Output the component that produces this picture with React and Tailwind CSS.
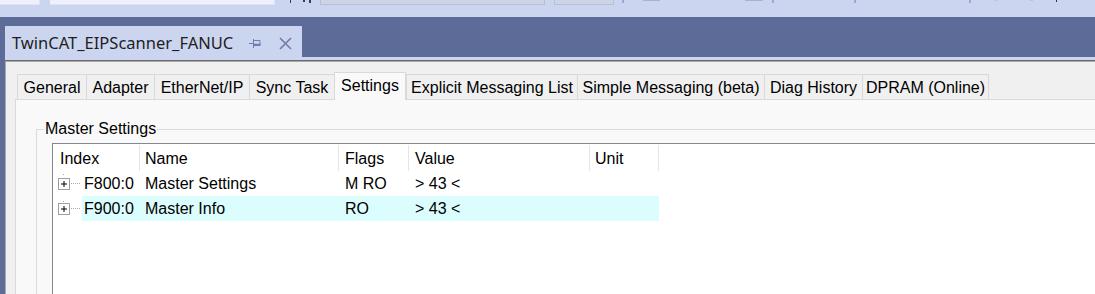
import React from "react";

const tabs = [
    { label: "General", w: "w-[69px]" },
    { label: "Adapter", w: "w-[68px]" },
    { label: "EtherNet/IP", w: "w-[95px]" },
    { label: "Sync Task", w: "w-[85px]" },
    { label: "Settings", w: "w-[72px]", active: true },
    { label: "Explicit Messaging List", w: "w-[171px]" },
    { label: "Simple Messaging (beta)", w: "w-[187px]" },
    { label: "Diag History", w: "w-[98px]" },
    { label: "DPRAM (Online)", w: "w-[127px]", last: true },
];

const rows = [
    { index: "F800:0", name: "Master Settings", flags: "M RO", value: "> 43 <", dotY: 3 },
    { index: "F900:0", name: "Master Info", flags: "RO", value: "> 43 <", dotY: 5, selected: true },
];

const TreeNode = ({ dotY }) => (
    <svg width="29" height="25" viewBox="0 0 29 25" className="shrink-0">
        <rect x="10" y={dotY} width="1" height="1" fill="#a8a8a8" />
        <rect x="5.5" y="7.5" width="11" height="11" fill="#fff" stroke="#a0a0a0" />
        <path d="M8 13h6M11 10v6" stroke="#000" strokeWidth="1" />
        {[18, 20, 22, 24, 26].map((x) => (
            <rect key={x} x={x} y="12" width="1" height="1" fill="#a8a8a8" />
        ))}
    </svg>
);

const App = () => {
    return (
        <div
            className="w-[1095px] h-[294px] overflow-hidden bg-[#ccd5f0] flex flex-col text-black"
            style={{ fontFamily: '"Liberation Sans", Arial, sans-serif' }}
        >
            {/* toolbar remnants */}
            <div className="h-[17px] shrink-0 flex items-start">
                <div className="w-[40px] h-[5px] bg-[#eef1fc] border-r border-b border-[#dde3f6]" />
                <div className="ml-[10px] w-[225px] h-[5px] bg-[#eef1fc] border-r border-b border-[#dde3f6]" />
                <div className="ml-[15px] w-[1px] h-[3px] bg-[#3a3f55]" />
                <div className="ml-[12px] w-[2px] h-[2px] bg-[#3a3f55]" />
                <div className="ml-[4px] w-[2px] h-[3px] bg-[#3a3f55]" />
                <div className="ml-[9px] w-[225px] h-[5px] bg-[#cdd4e8] border-x border-b border-[#b8bfd5]" />
                <div className="ml-[9px] w-[60px] h-[5px] bg-[#cdd4e8] border-x border-b border-[#b8bfd5]" />
                <div className="ml-[8px] w-[2px] h-[3px] bg-[#9aa7d9]" />
                <div className="ml-[19px] w-[17px] h-[1px] bg-[#a9b1cc]" />
                <div className="ml-[85px] w-[18px] h-[1px] bg-[#a9b1cc]" />
                <div className="ml-[9px] w-[2px] h-[3px] bg-[#9aa7d9]" />
                <div className="ml-[80px] w-[2px] h-[3px] bg-[#9aa7d9]" />
                <div className="ml-[113px] w-[2px] h-[3px] bg-[#9aa7d9]" />
                <div className="ml-[24px] w-[3px] h-[1px] bg-[#b8c1e2]" />
                <div className="ml-[32px] w-[3px] h-[1px] bg-[#b8c1e2]" />
                <div className="ml-[23px] w-[1px] h-[2px] bg-[#333]" />
            </div>

            {/* document tab well */}
            <div className="h-[40px] shrink-0 bg-[#5c6b98] flex items-end pl-[5px]">
                <div className="h-[31px] w-[297px] bg-[#ccd5f0] flex items-center pl-[7px] pt-[3px]">
                    <span
                        className="w-[237px] shrink-0 text-[16.5px] leading-[20px] text-[#1e1e1e] whitespace-nowrap"
                        style={{ fontFamily: '"Noto Sans", "Open Sans", sans-serif' }}
                    >
                        TwinCAT_EIPScanner_FANUC
                    </span>
                    <svg width="12" height="9" viewBox="0 0 12 9" className="mt-[1px]">
                        <path d="M0 4.5h4M4.5 0v9" stroke="#6e7fae" strokeWidth="1" />
                        <path d="M4.5 1.5h6.5v5h-6.5" fill="none" stroke="#6e7fae" strokeWidth="1" />
                        <path d="M4.5 5.5h7" stroke="#6e7fae" strokeWidth="1.5" />
                    </svg>
                    <svg width="13" height="13" viewBox="0 0 13 13" className="ml-[18px]">
                        <path d="M1 1l11 11M12 1L1 12" stroke="#6f7ca5" strokeWidth="1.6" />
                    </svg>
                </div>
            </div>

            <div className="flex flex-1 min-h-0">
                <div className="w-[5px] shrink-0 bg-[#5c6b98]" />
                <div className="flex-1 flex flex-col min-w-0">
                    <div className="h-[3px] shrink-0 bg-[#ccd5f0]" />
                    <div className="h-[1px] shrink-0 bg-[#6b6b6b]" />
                    <div className="flex-1 flex flex-col bg-[#f0f0f0] border-t border-l border-[#a9a9a9] pl-[9px] pt-[10px]">
                        {/* property tabs */}
                        <div className="flex items-end h-[28px] ml-[2px] -mb-px relative z-10">
                            {tabs.map((t) =>
                                t.active ? (
                                    <div
                                        key={t.label}
                                        className={`${t.w} h-[28px] flex items-center justify-center pb-[2px] bg-[#f9f9f9] border-l border-t border-r border-[#d9d9d9] text-[16px] whitespace-nowrap`}
                                    >
                                        {t.label}
                                    </div>
                                ) : (
                                    <div
                                        key={t.label}
                                        className={`${t.w} h-[25px] mb-px flex items-center justify-center pt-[1px] bg-[#f0f0f0] border-l border-t border-[#d9d9d9] text-[16px] whitespace-nowrap ${t.last ? "border-r" : ""}`}
                                    >
                                        {t.label}
                                    </div>
                                )
                            )}
                        </div>

                        {/* tab page */}
                        <div className="flex-1 bg-[#f9f9f9] border-t border-l border-[#d9d9d9] pl-[20px] pt-[20px]">
                            <fieldset className="border border-r-0 border-[#dcdcdc] h-[300px]">
                                <legend className="ml-[7px] px-[1px] text-[16px] leading-[18px]">
                                    Master Settings
                                </legend>
                                <div className="ml-[15px] mt-[5px] h-[250px] bg-white border border-r-0 border-[#828790] text-[16px]">
                                    {/* header */}
                                    <div className="flex h-[27px]">
                                        <div className="w-[87px] mt-[1px] border-r border-[#e5e5e5] pl-[7px] pt-[2px] flex items-center">
                                            Index
                                        </div>
                                        <div className="w-[199px] mt-[1px] border-r border-[#e5e5e5] pl-[5px] pt-[2px] flex items-center">
                                            Name
                                        </div>
                                        <div className="w-[70px] mt-[1px] border-r border-[#e5e5e5] pl-[6px] pt-[2px] flex items-center">
                                            Flags
                                        </div>
                                        <div className="w-[181px] mt-[1px] border-r border-[#e5e5e5] pl-[6px] pt-[2px] flex items-center">
                                            Value
                                        </div>
                                        <div className="w-[69px] mt-[1px] border-r border-[#e5e5e5] pl-[5px] pt-[2px] flex items-center">
                                            Unit
                                        </div>
                                    </div>

                                    {/* rows */}
                                    {rows.map((r) => (
                                        <div key={r.index} className="flex h-[25px]">
                                            <TreeNode dotY={r.dotY} />
                                            <div className={`flex ${r.selected ? "bg-[#dcfdfd]" : ""}`}>
                                                <div className="w-[58px] pl-[2px] pt-[1px] flex items-center">{r.index}</div>
                                                <div className="w-[199px] pl-[5px] pt-[1px] flex items-center">{r.name}</div>
                                                <div className="w-[70px] pl-[6px] pt-[1px] flex items-center">{r.flags}</div>
                                                <div className="w-[181px] pl-[6px] pt-[1px] flex items-center">{r.value}</div>
                                                <div className="w-[69px]" />
                                            </div>
                                        </div>
                                    ))}
                                </div>
                            </fieldset>
                        </div>
                    </div>
                </div>
            </div>
        </div>
    );
};

export default App;
